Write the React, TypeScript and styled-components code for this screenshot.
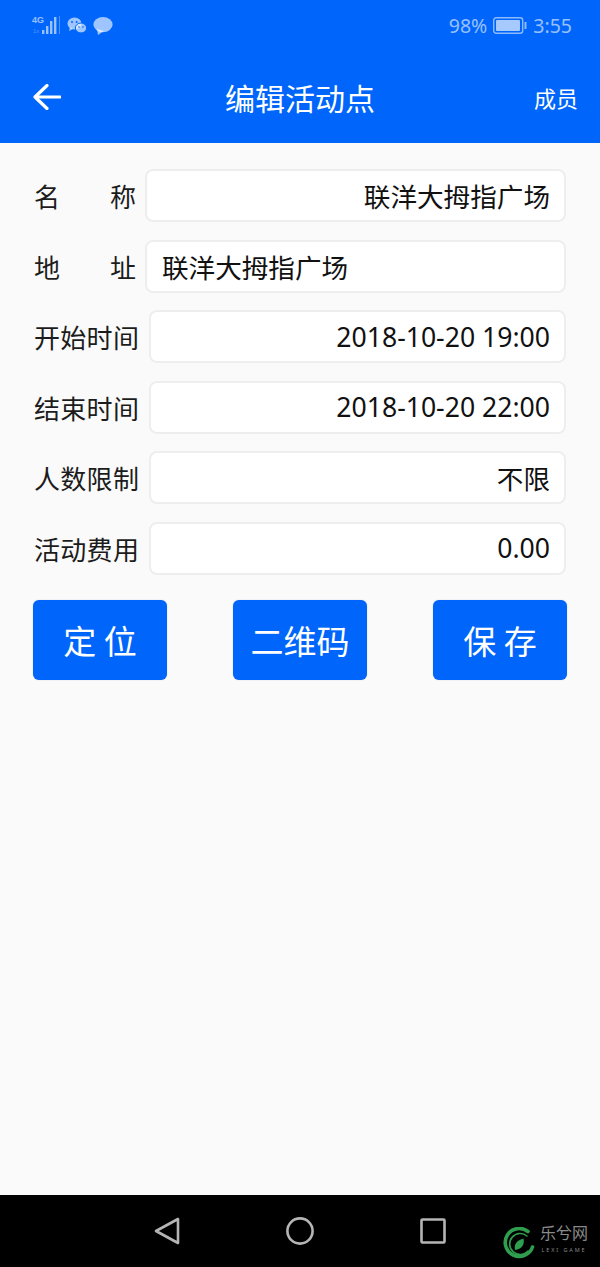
import React from "react";
import styled, { createGlobalStyle } from "styled-components";

const Global = createGlobalStyle`
  html, body { margin: 0; padding: 0; background: #fafafa; }
  * { box-sizing: border-box; }
  body { font-family: "Noto Sans", "Noto Sans CJK SC", sans-serif; }
`;

const Screen = styled.div`
  width: 600px;
  height: 1267px;
  display: flex;
  flex-direction: column;
  background: #fafafa;
  overflow: hidden;
`;

const Header = styled.header`
  height: 143px;
  flex: none;
  background: #0066fb;
  display: flex;
  flex-direction: column;
`;

const StatusBar = styled.div`
  height: 51px;
  display: flex;
  align-items: center;
  padding: 0 28px 0 31px;
  color: rgba(255, 255, 255, 0.6);
`;

const StatusLeft = styled.div`
  display: flex;
  align-items: center;
  gap: 6px;
  flex: 1;
`;

const StatusRight = styled.div`
  display: flex;
  align-items: center;
  gap: 6px;
  font-size: 19.5px;
  line-height: 24px;
`;

const TitleBar = styled.div`
  flex: 1;
  display: grid;
  grid-template-columns: 1fr auto 1fr;
  align-items: center;
  padding: 0 22px 0 33px;
  color: #fff;
`;

const Title = styled.h1`
  margin: 0 0 0 -11px;
  font-size: 30px;
  font-weight: 400;
  line-height: 40px;
  font-family: "Noto Sans CJK SC", sans-serif;
`;

const MemberLink = styled.span`
  justify-self: end;
  font-size: 22px;
  line-height: 30px;
  font-family: "Noto Sans CJK SC", sans-serif;
`;

const Form = styled.main`
  flex: 1;
  padding: 26px 33px 0 33px;
  display: flex;
  flex-direction: column;
`;

const Row = styled.div`
  display: flex;
  align-items: center;
  height: 53px;
  margin: 0 1px 17.5px 0;
`;

const Label = styled.label<{ $justify?: boolean }>`
  flex: none;
  width: ${(p) => (p.$justify ? "112px" : "116px")};
  padding: 1px ${(p) => (p.$justify ? "9px" : "10px")} 0 1px;
  font-size: 26px;
  letter-spacing: ${(p) => (p.$justify ? "0" : "0.3px")};
  line-height: 36px;
  color: #1c1c1c;
  white-space: nowrap;
  font-family: "Noto Sans CJK SC", sans-serif;
  text-align-last: ${(p) => (p.$justify ? "justify" : "left")};
`;

const Field = styled.div<{ $left?: boolean }>`
  flex: 1;
  height: 53px;
  background: #fff;
  border: 2px solid #eeeeee;
  border-radius: 8px;
  padding: 0 14px 0 15px;
  display: flex;
  align-items: center;
  justify-content: ${(p) => (p.$left ? "flex-start" : "flex-end")};
  font-size: 26.6px;
  color: #111;
  white-space: nowrap;
`;

const Actions = styled.div`
  display: flex;
  justify-content: space-between;
  margin-top: 8px;
`;

const ActionButton = styled.button`
  width: 134px;
  height: 80px;
  border: none;
  border-radius: 6px;
  background: #0066fb;
  color: #fff;
  font-size: 33px;
  font-family: "Noto Sans CJK SC", sans-serif;
  padding: 0;
  box-shadow: 0 0 1px rgba(0, 60, 160, 0.4);
`;

const NavBar = styled.nav`
  height: 72px;
  flex: none;
  background: #000;
  position: relative;
  display: flex;
  align-items: center;
  justify-content: center;
  gap: 99px;
  padding-bottom: 1px;
`;

const Watermark = styled.div`
  position: absolute;
  right: 12px;
  top: 28px;
  display: flex;
  align-items: flex-start;
  gap: 5px;
  color: #8a8a8a;
`;

const WatermarkLogo = styled.svg`
  display: block;
  margin-top: 4px;
`;

const WatermarkText = styled.div`
  display: flex;
  flex-direction: column;
  align-items: center;
  gap: 5px;
`;

const WatermarkName = styled.span`
  font-size: 16px;
  line-height: 19px;
  font-family: "Noto Sans CJK SC", sans-serif;
`;

const WatermarkSub = styled.span`
  font-size: 5.5px;
  line-height: 7px;
  letter-spacing: 1.9px;
  white-space: nowrap;
`;

const TinyNetwork = styled.svg`
  display: block;
`;

const rows = [
  { label: "名 称", value: "联洋大拇指广场", justify: true },
  { label: "地 址", value: "联洋大拇指广场", justify: true, left: true },
  { label: "开始时间", value: "2018-10-20 19:00" },
  { label: "结束时间", value: "2018-10-20 22:00" },
  { label: "人数限制", value: "不限" },
  { label: "活动费用", value: "0.00" },
];

export default function App() {
  return (
    <Screen>
      <Global />
      <Header>
        <StatusBar>
          <StatusLeft>
            <TinyNetwork width="30" height="22" viewBox="0 0 30 22">
              <text x="1" y="8" fontSize="9" fontWeight="700" fill="rgba(255,255,255,.6)" fontFamily="Liberation Sans">4G</text>
              <text x="2" y="18" fontSize="6" fill="rgba(255,255,255,.3)" fontFamily="Liberation Sans">1x</text>
              <g fill="rgba(255,255,255,.6)">
                <rect x="11" y="15" width="2.4" height="4" />
                <rect x="15" y="11" width="2.4" height="8" />
                <rect x="19" y="6" width="2.4" height="13" />
                <rect x="23" y="2" width="2.4" height="17" />
              </g>
              <rect x="28" y="1" width="1" height="18" fill="rgba(255,255,255,.3)" />
            </TinyNetwork>
            <svg width="20" height="18" viewBox="0 0 20 18" fill="rgba(255,255,255,.62)">
              <ellipse cx="7.5" cy="6.5" rx="7" ry="6" />
              <path d="M3 10l-1 4 4-2z" />
              <ellipse cx="14" cy="11" rx="5.6" ry="5" stroke="#0066fb" strokeWidth="1" />
              <circle cx="5" cy="5" r="1" fill="#0066fb" />
              <circle cx="9.6" cy="5" r="1" fill="#0066fb" />
              <circle cx="12" cy="10" r=".8" fill="#0066fb" />
              <circle cx="16" cy="10" r=".8" fill="#0066fb" />
            </svg>
            <svg width="20" height="18" viewBox="0 0 20 18" fill="rgba(255,255,255,.62)">
              <ellipse cx="10" cy="7.6" rx="9.6" ry="7.6" />
              <path d="M4 12l1 6 6-4z" />
            </svg>
          </StatusLeft>
          <StatusRight>
            <span>98%</span>
            <svg width="34" height="18" viewBox="0 0 34 18">
              <rect x=".7" y=".7" width="29" height="15.6" rx="2.5" fill="none" stroke="rgba(255,255,255,.55)" strokeWidth="1.4" />
              <rect x="3" y="3" width="24" height="11" rx="1" fill="rgba(255,255,255,.65)" />
              <rect x="31.5" y="5" width="2" height="7" fill="rgba(255,255,255,.55)" />
            </svg>
            <span>3:55</span>
          </StatusRight>
        </StatusBar>
        <TitleBar>
          <svg width="28" height="26" viewBox="0 0 28 26" fill="none" stroke="#fff" strokeWidth="3.2" strokeLinecap="round" strokeLinejoin="round">
            <path d="M27 13H2M14 1.5L2 13l12 11.5" />
          </svg>
          <Title>编辑活动点</Title>
          <MemberLink>成员</MemberLink>
        </TitleBar>
      </Header>
      <Form>
        {rows.map((r) => (
          <Row key={r.label}>
            <Label $justify={r.justify}>{r.label}</Label>
            <Field $left={r.left}>{r.value}</Field>
          </Row>
        ))}
        <Actions>
          <ActionButton>定 位</ActionButton>
          <ActionButton>二维码</ActionButton>
          <ActionButton>保 存</ActionButton>
        </Actions>
      </Form>
      <NavBar>
        <svg width="34" height="34" viewBox="0 0 34 34" fill="none" stroke="#b5b5b5" strokeWidth="2.6" strokeLinejoin="round">
          <path d="M28 5v24L6 17z" />
        </svg>
        <svg width="34" height="34" viewBox="0 0 34 34" fill="none" stroke="#b5b5b5" strokeWidth="2.6">
          <circle cx="17" cy="17" r="12.6" />
        </svg>
        <svg width="34" height="34" viewBox="0 0 34 34" fill="none" stroke="#b5b5b5" strokeWidth="2.6" strokeLinejoin="round">
          <rect x="5.5" y="5.5" width="23" height="23" rx="1" />
        </svg>
        <Watermark>
          <WatermarkLogo width="32" height="32" viewBox="0 0 32 32" fill="none">
            {/* spiral ring around a small leaf */}
            <path d="M25 4.5A14 14 0 1 0 29.5 20" stroke="#2f9e4f" strokeWidth="3.6" strokeLinecap="round" />
            <path d="M25 24A10.5 10.5 0 1 1 24 9" stroke="#2f9e4f" strokeWidth="1.6" strokeLinecap="round" />
            <path d="M12 23c-1.4-5.5 2-10 8.5-11.5 1.5 6-2 11-8.500 11.500z" fill="#2f9e4f" />
          </WatermarkLogo>
          <WatermarkText>
            <WatermarkName>乐兮网</WatermarkName>
            <WatermarkSub>LEXI GAME</WatermarkSub>
          </WatermarkText>
        </Watermark>
      </NavBar>
    </Screen>
  );
}
